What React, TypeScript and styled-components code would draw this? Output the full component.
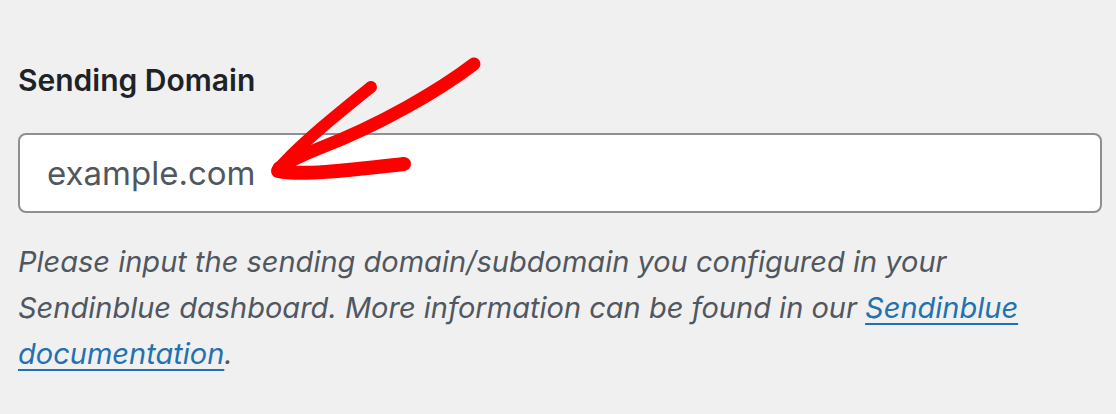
import styled, { createGlobalStyle } from 'styled-components'

const GlobalStyle = createGlobalStyle`
	html, body {
		margin: 0;
		padding: 0;
		background: #f0f0f1;
	}
	body {
		font-family: Inter, 'Liberation Sans', sans-serif;
		-webkit-font-smoothing: antialiased;
	}
`

const Page = styled.div`
	position: relative;
	width: 1116px;
	height: 414px;
	padding: 62px 14px 0 18px;
	box-sizing: border-box;
`

const Label = styled.label`
	display: block;
	font-size: 30px;
	font-weight: 600;
	line-height: 36px;
	color: #1d2327;
	margin-bottom: 35px;
`

const Input = styled.input`
	display: block;
	width: 100%;
	height: 80px;
	box-sizing: border-box;
	padding: 0 27px;
	border: 2px solid #8c8f94;
	border-radius: 8px;
	background: #fff;
	font-family: inherit;
	font-size: 33px;
	color: #50575e;
	outline: none;
`

const Description = styled.p`
	margin: 26px 0 0;
	font-size: 29px;
	font-style: italic;
	line-height: 46px;
	color: #50575e;
`

const DocLink = styled.a`
	color: #2271b1;
	text-decoration: underline;
	text-underline-offset: 5px;
	text-decoration-thickness: 2px;
`

const Annotation = styled.svg`
	position: absolute;
	left: 0;
	top: 0;
	pointer-events: none;
`

const App: React.FC = () => {
	return (
		<>
			<GlobalStyle />
			<Page>
				<Label htmlFor="sending-domain">Sending Domain</Label>
				<Input id="sending-domain" defaultValue="example.com" />
				<Description>
					Please input the sending domain/subdomain you configured in your
					Sendinblue dashboard. More information can be found in our{' '}
					<DocLink href="#">Sendinblue documentation</DocLink>.
				</Description>

				<Annotation width="1116" height="414" viewBox="0 0 1116 414">
					<g
						fill="none"
						stroke="#ff0000"
						strokeLinecap="round"
						strokeLinejoin="round"
					>
						<path d="M474 64 C440 90 380 125 320 148 C300 156 288 162 279 168" strokeWidth="13" />
						<path d="M371 87 C340 112 305 140 281 166" strokeWidth="12" />
						<path d="M278 171 C300 176 350 170 404 164" strokeWidth="14" />
					</g>
				</Annotation>
			</Page>
		</>
	)
}

export default App
